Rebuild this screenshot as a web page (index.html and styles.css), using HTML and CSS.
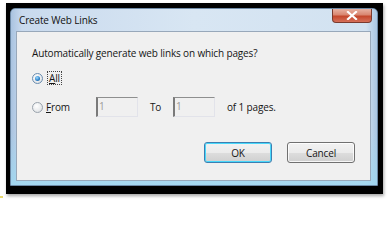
FILE: index.html
```html
<!DOCTYPE html>
<html>
<head>
<meta charset="utf-8">
<link rel="stylesheet" href="styles.css">
</head>
<body>
<div class="shot">
  <div class="window">
    <div class="titlebar">
      <span class="title">Create Web Links</span>
      <span class="close"><svg width="12" height="9" viewBox="0 0 12 9"><path d="M2 1 L10 8 M10 1 L2 8" stroke="#fff" stroke-width="2.2" stroke-linecap="square"/></svg></span>
    </div>
    <div class="panel">
      <div class="question">Automatically generate web links on which pages?</div>
      <div class="row-all">
        <span class="radio checked"><span class="dot"></span></span>
        <span class="focus"><u>A</u>ll</span>
      </div>
      <div class="row-from">
        <span class="radio-cell"><span class="radio"></span><span class="lbl"><u>F</u>rom</span></span>
        <span class="field">1</span>
        <span class="to">To</span>
        <span class="field">1</span>
        <span class="of">of 1 pages.</span>
      </div>
      <div class="buttons">
        <span class="btn default">OK</span>
        <span class="btn">Cancel</span>
      </div>
    </div>
  </div>
</div>
<div class="mark"></div>
</body>
</html>
```
FILE: styles.css
```css
html, body {
  margin: 0;
  padding: 0;
  background: #ffffff;
}
body {
  width: 388px;
  height: 201px;
  overflow: hidden;
  font-family: "Open Sans", "Noto Sans", sans-serif;
  font-size: 10px;
  letter-spacing: -0.15px;
  color: #151515;
}
.shot {
  margin: 3px 0 0 6px;
  width: 377px;
  height: 191px;
  box-sizing: border-box;
  background: #000;
  padding: 5px 5px 8px 4px;
  box-shadow: 1px 2px 3px rgba(0,0,0,0.35);
}
.window {
  height: 178px;
  box-sizing: border-box;
  border-radius: 5px 5px 0 0;
  border: 1px solid #6e8aa6;
  background:
    linear-gradient(180deg, rgba(255,255,255,0) 70%, rgba(160,215,240,0.9) 100%),
    linear-gradient(90deg, #a9c3e0 0%, #c9daee 3%, #d8e6f3 50%, #d2e2f1 97%, #a9c6e2 100%);
  display: flex;
  flex-direction: column;
  padding: 0 6px 4px 5px;
}
.titlebar {
  height: 22px;
  display: flex;
  align-items: flex-start;
  justify-content: space-between;
  flex: none;
}
.title {
  margin: 4px 0 0 3px;
  line-height: 14px;
  color: #111;
}
.close {
  margin: 0 -1px 0 0;
  width: 38px;
  height: 13px;
  border: 1px solid #7a3a2e;
  border-top: none;
  border-radius: 0 0 4px 4px;
  background: linear-gradient(180deg, #e8b2a2 0%, #d98670 45%, #c4472c 55%, #d5705a 100%);
  display: flex;
  align-items: center;
  justify-content: center;
}
.panel {
  flex: 1;
  border: 1px solid #98a8ba;
  background: #f0f0f0;
  padding: 14px 15px 0 15px;
  display: flex;
  flex-direction: column;
}
.question {
  line-height: 14px;
}
.row-all {
  margin-top: 11px;
  height: 14px;
  display: flex;
  align-items: center;
}
.radio {
  width: 9px;
  height: 9px;
  border: 1px solid #9aa3ad;
  border-radius: 50%;
  background: radial-gradient(circle at 40% 35%, #ffffff 0%, #e8eaec 60%, #d0d4d8 100%);
  display: inline-flex;
  align-items: center;
  justify-content: center;
  flex: none;
}
.radio.checked {
  border-color: #6a8db0;
}
.dot {
  width: 5px;
  height: 5px;
  border-radius: 50%;
  background: radial-gradient(circle at 40% 35%, #9fdcff 0%, #2a7fc8 60%, #164f86 100%);
}
.focus {
  margin-left: 4px;
  border: 1px dotted #444;
  padding: 0 1px;
  line-height: 12px;
}
.row-from {
  margin-top: 12px;
  height: 20px;
  display: flex;
  align-items: center;
}
.radio-cell {
  width: 64px;
  display: flex;
  align-items: center;
}
.lbl {
  margin-left: 3px;
}
.field {
  width: 42px;
  height: 20px;
  box-sizing: border-box;
  border-top: 1px solid #8e8f8f;
  border-left: 2px solid #7a7a7a;
  border-right: 1px solid #e2e3ea;
  border-bottom: 1px solid #e2e3ea;
  background: #f0f0f0;
  color: #9a9a9a;
  padding-left: 1px;
  line-height: 17px;
}
.to {
  width: 35px;
  box-sizing: border-box;
  padding-left: 12px;
}
.of {
  margin-left: 12px;
}
.buttons {
  margin-top: 25px;
  display: flex;
  justify-content: flex-end;
  gap: 15px;
}
.btn {
  width: 68px;
  height: 21px;
  box-sizing: border-box;
  border: 1px solid #707070;
  border-radius: 3px;
  background: linear-gradient(180deg, #f2f2f2 0%, #ebebeb 50%, #dddddd 51%, #cfcfcf 100%);
  display: flex;
  align-items: center;
  justify-content: center;
  box-shadow: inset 0 0 0 1px rgba(255,255,255,0.8);
}
.btn.default {
  border-color: #3c7fb1;
  box-shadow: inset 0 0 0 1px #48d8fb;
}
.mark {
  position: absolute;
  left: 0;
  top: 196px;
  width: 3px;
  height: 2px;
  background: #e8d870;
}
```
